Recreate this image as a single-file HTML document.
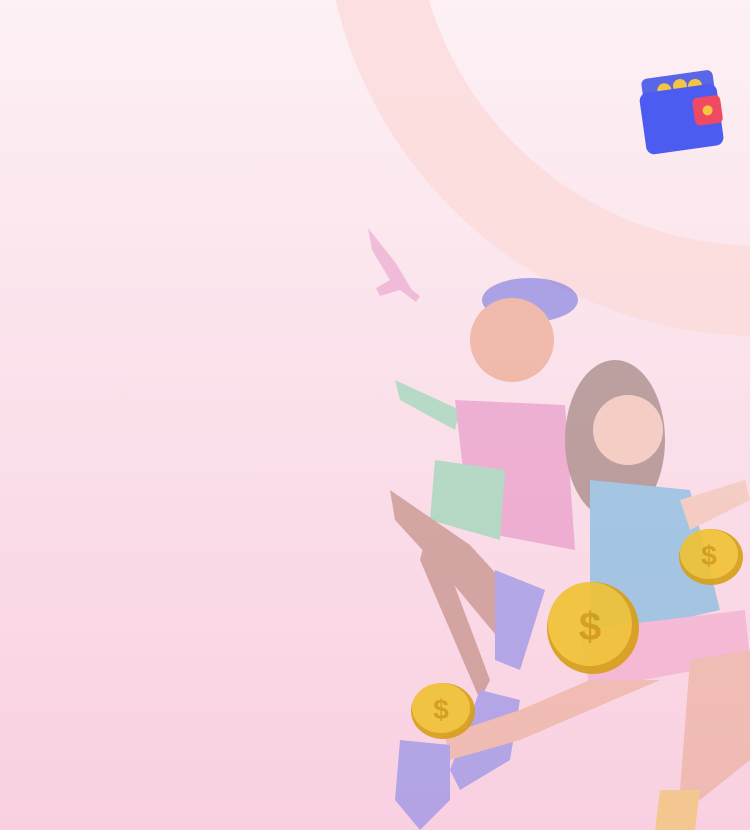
<!DOCTYPE html>
<html><head><meta charset="utf-8"><style>
html,body{margin:0;padding:0}
body{width:750px;height:830px;overflow:hidden;position:relative;background:linear-gradient(180deg,#fdf1f5 0%,#fbe3ec 40%,#f9d0e1 100%);font-family:"Liberation Sans",sans-serif}
svg{position:absolute;left:0;top:0}
</style></head><body>
<svg width="750" height="830" viewBox="0 0 750 830">
<circle cx="760" cy="-100" r="391" fill="none" stroke="#fbdcdc" stroke-width="90" opacity="0.85"/>
<!-- wallet -->
<g transform="rotate(-8 682 115)">
<rect x="646" y="74" width="72" height="30" rx="6" fill="#5a66e8"/>
<circle cx="668" cy="88" r="7" fill="#f2c542"/><circle cx="684" cy="86" r="7" fill="#f2c542"/><circle cx="699" cy="88" r="7" fill="#f2c542"/>
<rect x="642" y="88" width="78" height="62" rx="8" fill="#4d5cf0"/>
<rect x="694" y="100" width="28" height="28" rx="5" fill="#f04a63"/>
<circle cx="708" cy="114" r="5" fill="#f5c63f"/>
</g>
<g opacity="0.55">
<!-- gun -->
<path d="M368 228 L395 262 L412 290 L420 296 L416 302 L400 290 L380 296 L376 288 L390 280 L372 250 Z" fill="#e79ac8"/>
<!-- boy -->
<ellipse cx="530" cy="300" rx="48" ry="22" fill="#6a6ce0"/>
<circle cx="512" cy="340" r="42" fill="#e89a78"/>
<path d="M395 380 L460 410 L455 430 L400 400 Z" fill="#7ed6a8"/>
<path d="M455 400 L565 405 L575 550 L470 530 Z" fill="#e48ac0"/>
<path d="M435 460 L505 470 L500 540 L430 520 Z" fill="#7ed6a8"/>
<path d="M390 490 L470 545 L520 600 L500 640 L450 580 L395 520 Z" fill="#b57a6a"/>
<path d="M430 520 L490 680 L480 700 L420 560 Z" fill="#b57a6a"/>
<path d="M495 570 L545 590 L520 670 L495 660 Z" fill="#7b7fe8"/>
<path d="M480 690 L520 700 L510 760 L460 790 L450 770 Z" fill="#7b7fe8"/>
<!-- girl -->
<ellipse cx="615" cy="440" rx="50" ry="80" fill="#8a6a62"/>
<circle cx="628" cy="430" r="35" fill="#f0c0a8"/>
<path d="M590 480 L690 490 L720 610 L590 640 Z" fill="#5fb4df"/>
<path d="M680 500 L745 480 L750 500 L690 530 Z" fill="#f0c0a8"/>
<path d="M580 630 L745 610 L750 660 L590 690 Z" fill="#f1a2c8"/>
<path d="M590 680 L660 680 L520 740 L450 760 L445 735 L520 710 Z" fill="#e8a98e"/>
<path d="M690 660 L750 650 L750 760 L700 800 L680 790 Z" fill="#e8a98e"/>
<path d="M400 740 L450 745 L450 800 L420 830 L395 800 Z" fill="#7b7fe8"/>
<path d="M660 790 L700 790 L695 830 L655 830 Z" fill="#f0c050"/>
</g>
<!-- coins -->
<g opacity="0.9">
<ellipse cx="593" cy="628" rx="46" ry="46" fill="#d79f15"/>
<ellipse cx="590" cy="624" rx="42" ry="42" fill="#f1c232"/>
<text x="590" y="640" font-size="40" fill="#d19a10" text-anchor="middle" font-weight="bold">$</text>
<ellipse cx="711" cy="557" rx="32" ry="28" fill="#d79f15"/>
<ellipse cx="709" cy="554" rx="29" ry="25" fill="#f1c232"/>
<text x="709" y="565" font-size="28" fill="#d19a10" text-anchor="middle" font-weight="bold">$</text>
<ellipse cx="443" cy="711" rx="32" ry="28" fill="#d79f15"/>
<ellipse cx="441" cy="708" rx="29" ry="25" fill="#f1c232"/>
<text x="441" y="719" font-size="28" fill="#d19a10" text-anchor="middle" font-weight="bold">$</text>
</g>
</svg>
</body></html>
